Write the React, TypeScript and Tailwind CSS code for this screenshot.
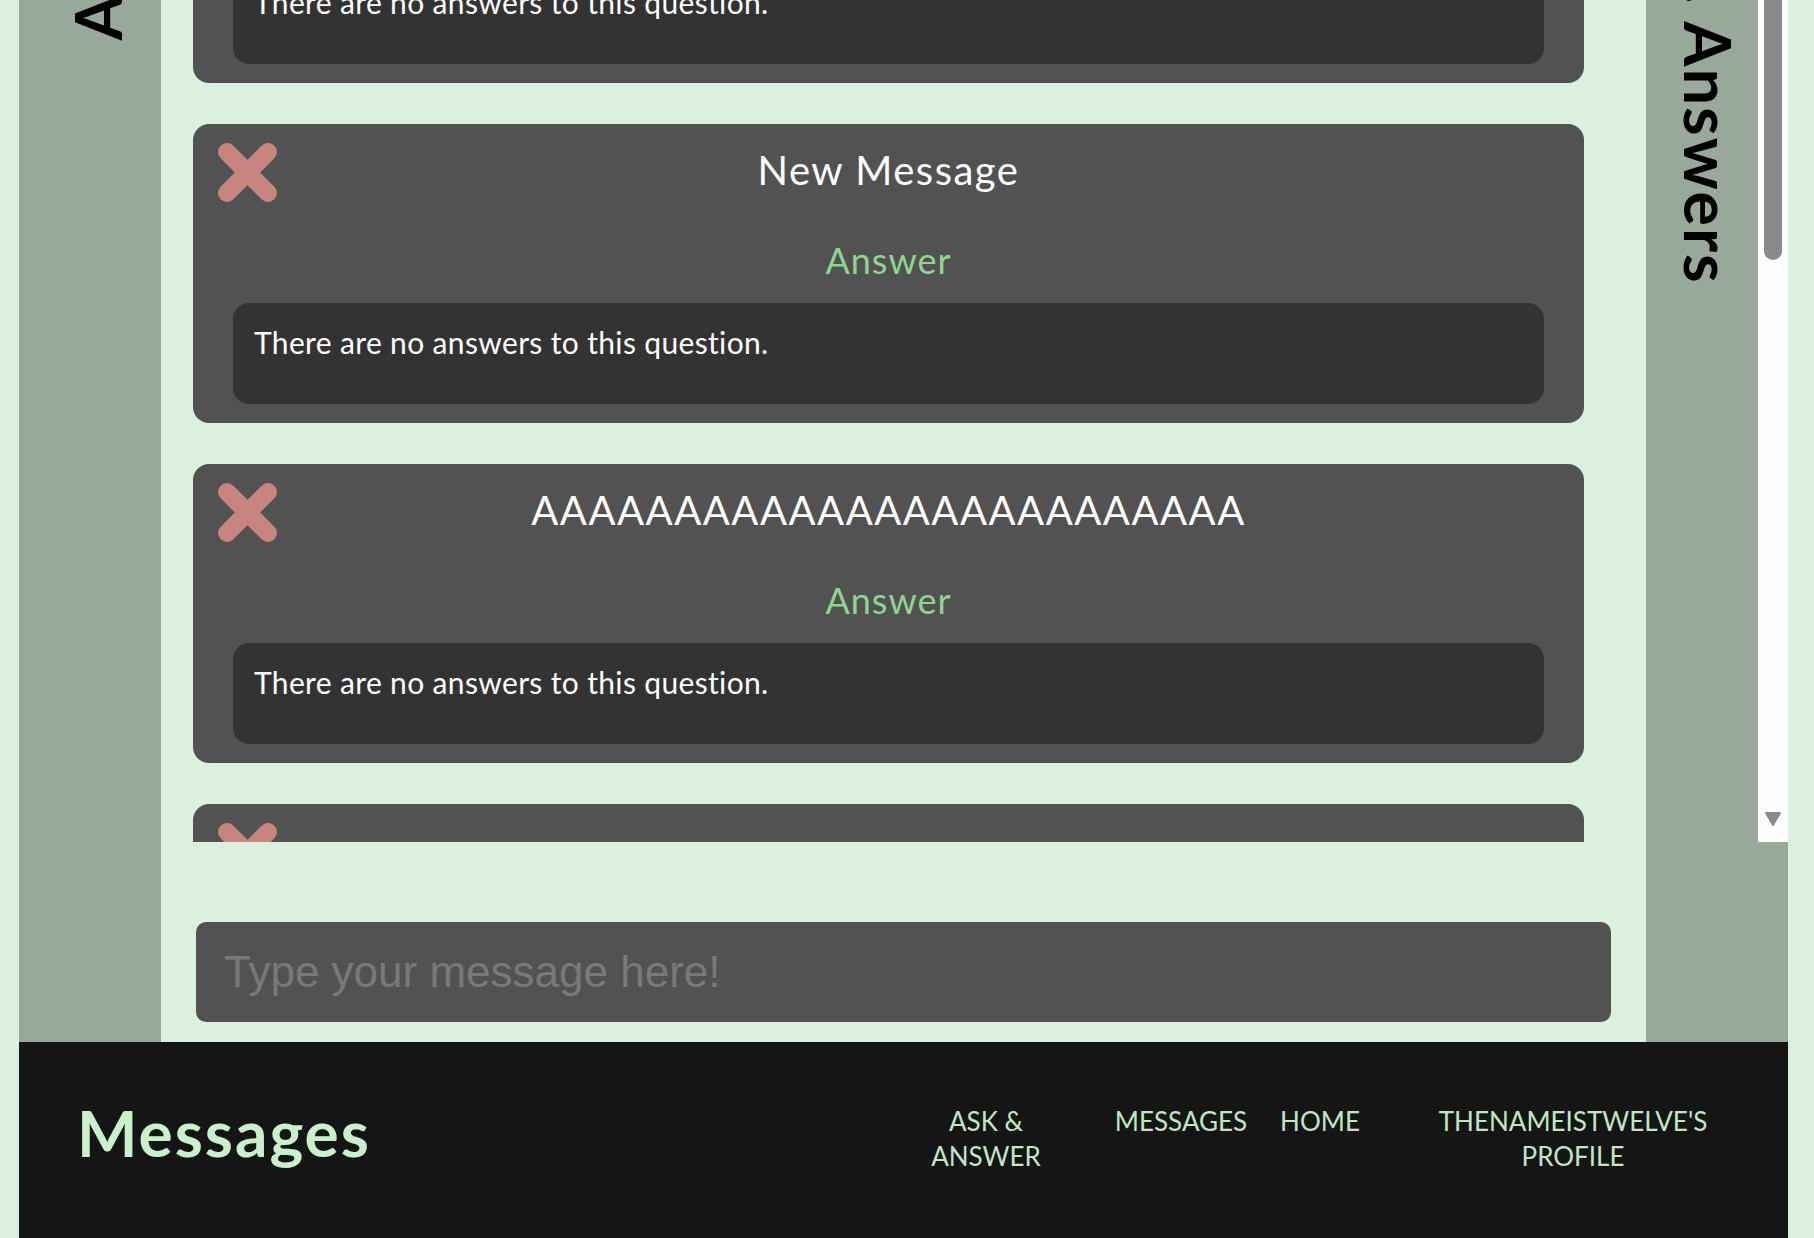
import { useState } from "react"

const messages = [
  { id: 1, title: "Hello there" },
  { id: 2, title: "New Message" },
  { id: 3, title: "AAAAAAAAAAAAAAAAAAAAAAAAA" },
  { id: 4, title: "aaaa" },
]

function CloseIcon() {
  return (
    <svg viewBox="0 0 59 59" className="w-full h-full" fill="none">
      <path d="M9 9L50 50M50 9L9 50" stroke="#c8857f" strokeWidth="18" strokeLinecap="round" />
    </svg>
  )
}

function MessageCard({ title }: { title: string }) {
  return (
    <div className="relative w-[1391px] shrink-0 rounded-[16px] bg-[#525252] px-[40px] pt-[18px] pb-[19px]">
      <button className="absolute left-[25px] top-[19px] h-[59px] w-[59px]">
        <CloseIcon />
      </button>
      <h2 className="text-center text-[40px] leading-[56px] tracking-[1.5px] text-white">{title}</h2>
      <h3 className="mt-[40px] text-center text-[36px] leading-[44px] tracking-[1px] text-[#8fd48f]">Answer</h3>
      <div className="mt-[21px] h-[101px] rounded-[16px] bg-[#333333] px-[21px] pt-[21px] text-[30px] leading-[36px] tracking-[0.35px] text-white">
        There are no answers to this question.
      </div>
    </div>
  )
}

export default function App() {
  const [text, setText] = useState("")

  return (
    <div className="min-h-screen bg-[#dbf0df] pl-[19px] pr-[26px] font-['Lato','Noto_Sans',sans-serif]">
      <div className="bg-[#98a99c]">
        {/* scrolled list */}
        <div className="flex h-[842px] overflow-hidden">
          <div className="w-[142px] shrink-0">
            <div className="flex h-[41px] flex-col items-center justify-end pl-[14px]">
              <span className="rotate-180 whitespace-nowrap text-[65px] font-bold leading-none tracking-[2px] text-black [writing-mode:vertical-rl]">
                Ask Questions
              </span>
            </div>
          </div>

          <div className="w-[1485px] shrink-0 bg-[#dbf0df] pl-[32px]">
            <div className="-mt-[216px] flex flex-col gap-[41px]">
              {messages.map((m) => (
                <MessageCard key={m.id} title={m.title} />
              ))}
            </div>
          </div>

          <div className="w-[112px] shrink-0">
            <div className="flex h-[285px] flex-col items-center justify-end pl-[13px]">
              <span className="whitespace-nowrap text-[65px] font-bold leading-none tracking-[2px] text-black [writing-mode:vertical-rl]">
                Questions. Answers
              </span>
            </div>
          </div>

          <div className="flex w-[30px] shrink-0 flex-col items-center bg-[#fdfdfd]">
            <div className="-mt-[20px] h-[280px] w-[18px] rounded-full bg-[#8a8a8a]" />
            <div className="flex-1" />
            <svg viewBox="0 0 18 14" className="mb-[16px] h-[14px] w-[18px]">
              <path d="M2 1H16L9 13Z" fill="#8a8a8a" stroke="#8a8a8a" strokeWidth="2" strokeLinejoin="round" />
            </svg>
          </div>
        </div>

        {/* message input */}
        <div className="flex h-[200px]">
          <div className="w-[142px] shrink-0" />
          <div className="w-[1485px] shrink-0 bg-[#dbf0df] pl-[35px] pt-[80px]">
            <input
              value={text}
              onChange={(e) => setText(e.target.value)}
              placeholder="Type your message here!"
              className="h-[100px] w-[1415px] rounded-[10px] bg-[#525252] px-[28px] font-['Liberation_Sans',Arial,sans-serif] text-[44px] text-white outline-none placeholder:text-[#797979]"
            />
          </div>
        </div>
      </div>

      <footer className="flex h-[196px] items-start bg-[#151515] pl-[58px] pt-[59px]">
        <h1 className="text-[64px] font-bold leading-[64px] tracking-[2px] text-[#c9efcc]">Messages</h1>
        <nav className="ml-auto mt-[3px] flex items-start pr-[65px] text-center text-[26px] uppercase leading-[35px] text-[#c3e5c5]">
          <a className="w-[142px]">Ask &amp; Answer</a>
          <a className="ml-[44px] w-[160px]">Messages</a>
          <a className="ml-[9px] w-[100px]">Home</a>
          <a className="ml-[53px] w-[300px]">TheNameIsTwelve's Profile</a>
        </nav>
      </footer>
    </div>
  )
}
